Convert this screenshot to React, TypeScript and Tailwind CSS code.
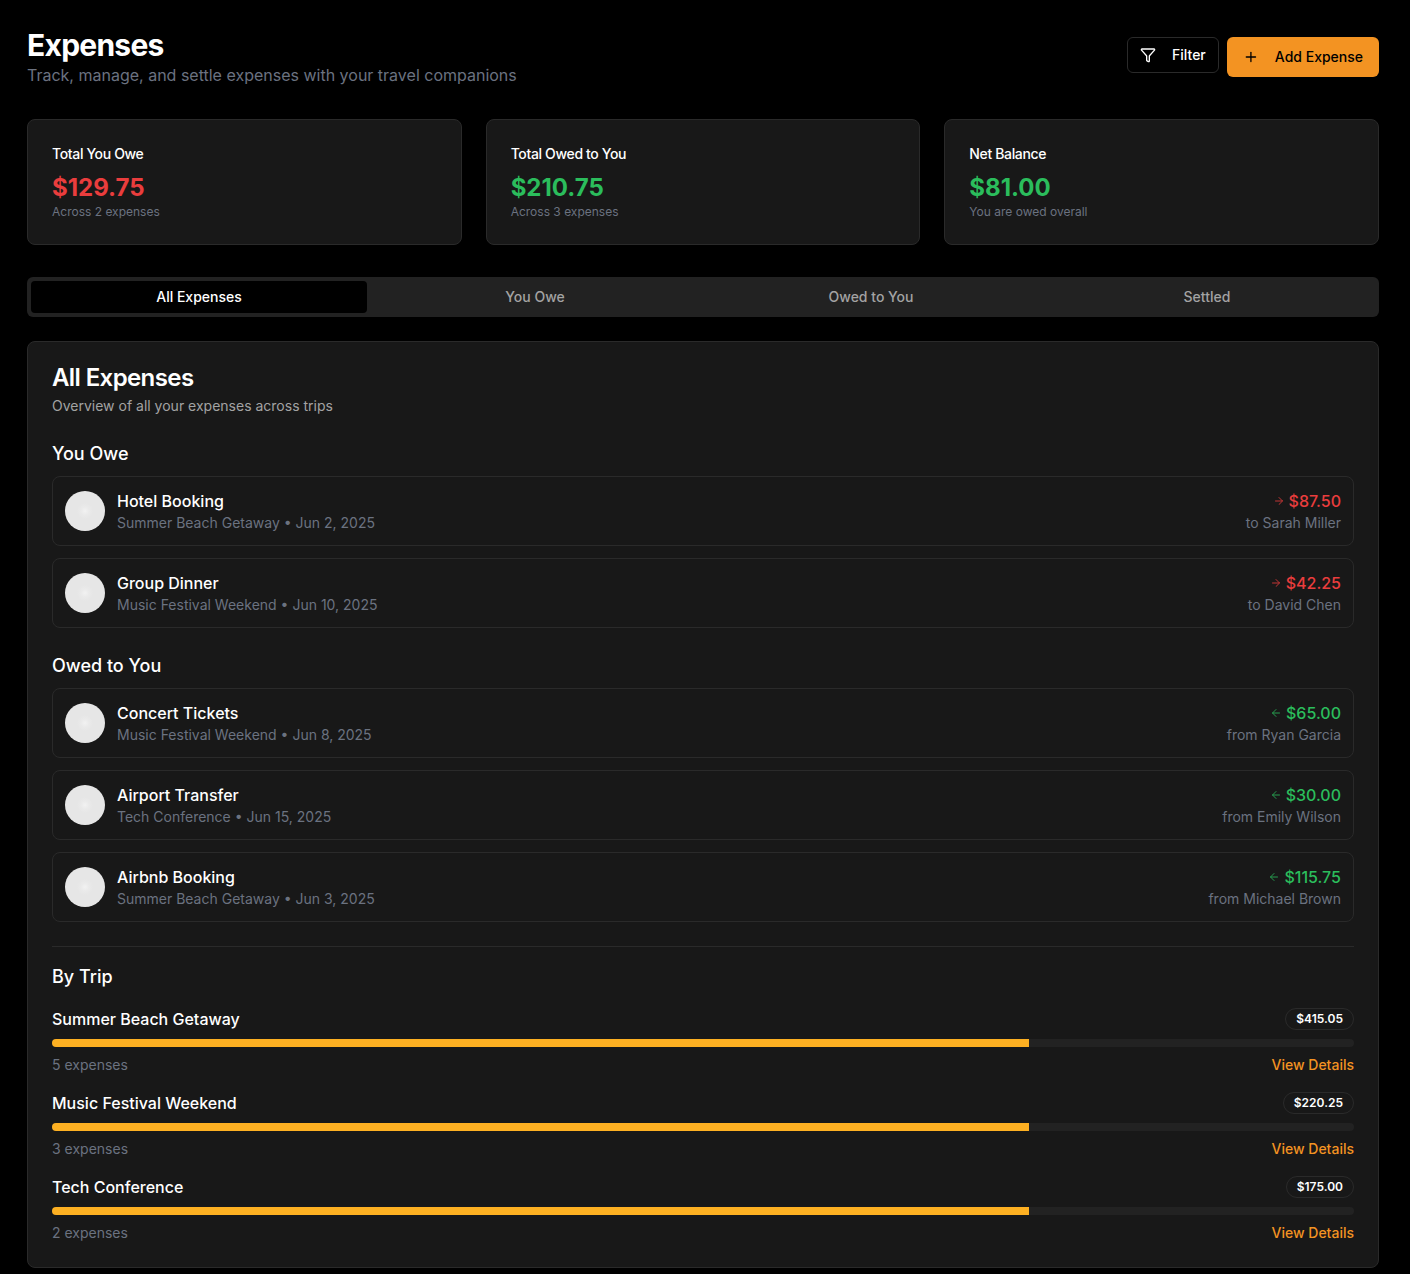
import { ArrowLeft, ArrowRight, Filter, Plus } from "lucide-react";

const youOwe = [
  { title: "Hotel Booking", meta: "Summer Beach Getaway • Jun 2, 2025", amount: "$87.50", who: "to Sarah Miller" },
  { title: "Group Dinner", meta: "Music Festival Weekend • Jun 10, 2025", amount: "$42.25", who: "to David Chen" },
];

const owedToYou = [
  { title: "Concert Tickets", meta: "Music Festival Weekend • Jun 8, 2025", amount: "$65.00", who: "from Ryan Garcia" },
  { title: "Airport Transfer", meta: "Tech Conference • Jun 15, 2025", amount: "$30.00", who: "from Emily Wilson" },
  { title: "Airbnb Booking", meta: "Summer Beach Getaway • Jun 3, 2025", amount: "$115.75", who: "from Michael Brown" },
];

const trips = [
  { name: "Summer Beach Getaway", total: "$415.05", count: "5 expenses" },
  { name: "Music Festival Weekend", total: "$220.25", count: "3 expenses" },
  { name: "Tech Conference", total: "$175.00", count: "2 expenses" },
];

function StatCard({ label, value, sub, color }: { label: string; value: string; sub: string; color: string }) {
  return (
    <div className="h-[126px] rounded-lg border border-[#2a2a2a] bg-[#181818] px-6 pt-6">
      <div className="text-sm leading-5 font-medium tracking-tight text-white">{label}</div>
      <div className={`mt-2 text-2xl leading-8 font-bold ${color}`}>{value}</div>
      <div className="text-xs leading-4 text-[#6b7280]">{sub}</div>
    </div>
  );
}

function ExpenseRow({ item, owed }: { item: (typeof youOwe)[number]; owed: boolean }) {
  return (
    <div className="flex h-[70px] items-center justify-between rounded-lg border border-[#2a2a2a] px-3">
      <div className="flex items-center gap-3">
        <div className="h-10 w-10 rounded-full bg-[radial-gradient(circle,_#f2f2f2_0,_#eaeaea_4px,_#e6e6e6_8px)]" />
        <div>
          <div className="text-base leading-6 font-medium text-white">{item.title}</div>
          <div className="text-sm leading-5 text-[#6b7280]">{item.meta}</div>
        </div>
      </div>
      <div className="text-right">
        <div className={`flex items-center justify-end gap-1 text-base leading-6 font-medium ${owed ? "text-[#2bbd5c]" : "text-[#ea3d3d]"}`}>
          {owed ? <ArrowLeft size={12} className="opacity-80" /> : <ArrowRight size={12} className="opacity-80" />}
          {item.amount}
        </div>
        <div className="text-sm leading-5 text-[#6b7280]">{item.who}</div>
      </div>
    </div>
  );
}

function TripRow({ trip }: { trip: (typeof trips)[number] }) {
  return (
    <div className="h-[84px]">
      <div className="flex h-[22px] items-center justify-between">
        <div className="text-base font-medium text-white">{trip.name}</div>
        <div className="rounded-full border border-[#2a2a2a] px-2.5 py-0.5 text-xs leading-4 font-semibold text-white">{trip.total}</div>
      </div>
      <div className="mt-[9px] h-2 overflow-hidden rounded-full bg-[#222222]">
        <div className="h-full w-3/4 bg-[#fdb022]" />
      </div>
      <div className="mt-2 flex items-center justify-between text-sm leading-5">
        <span className="text-[#6b7280]">{trip.count}</span>
        <span className="font-medium text-[#f39322]">View Details</span>
      </div>
    </div>
  );
}

export default function App() {
  return (
    <div className="h-[1274px] overflow-hidden bg-black pr-[31px] pl-[27px] pt-[27px] font-['Inter',sans-serif]">
      {/* Header */}
      <div className="flex items-start justify-between">
        <div>
          <h1 className="text-3xl leading-9 font-bold tracking-tight text-white">Expenses</h1>
          <p className="text-base leading-6 text-[#6b7280]">Track, manage, and settle expenses with your travel companions</p>
        </div>
        <div className="mt-[10px] flex items-start gap-2">
          <button className="flex h-9 w-[92px] items-center gap-4 rounded-md border border-[#2a2a2a] bg-black px-3 text-sm font-medium text-white">
            <Filter size={16} />
            Filter
          </button>
          <button className="flex h-10 w-[152px] items-center gap-4 rounded-md bg-[#f39322] px-4 text-sm font-medium whitespace-nowrap text-black">
            <Plus size={16} />
            Add Expense
          </button>
        </div>
      </div>

      {/* Totals */}
      <div className="mt-8 grid grid-cols-3 gap-6">
        <StatCard label="Total You Owe" value="$129.75" sub="Across 2 expenses" color="text-[#ea3d3d]" />
        <StatCard label="Total Owed to You" value="$210.75" sub="Across 3 expenses" color="text-[#2bbd5c]" />
        <StatCard label="Net Balance" value="$81.00" sub="You are owed overall" color="text-[#2bbd5c]" />
      </div>

      {/* Tabs */}
      <div className="mt-8 grid h-10 grid-cols-4 rounded-md bg-[#222222] p-1 text-sm font-medium">
        <div className="flex items-center justify-center rounded-sm bg-black text-white">All Expenses</div>
        <div className="flex items-center justify-center text-[#a3a3a3]">You Owe</div>
        <div className="flex items-center justify-center text-[#a3a3a3]">Owed to You</div>
        <div className="flex items-center justify-center text-[#a3a3a3]">Settled</div>
      </div>

      {/* Main card */}
      <div className="mt-6 h-[927px] rounded-lg border border-[#2a2a2a] bg-[#181818] px-6 pt-5">
        <h2 className="text-2xl leading-8 font-semibold tracking-tight text-white">All Expenses</h2>
        <p className="mt-0.5 text-sm leading-5 text-[#a3a3a3]">Overview of all your expenses across trips</p>

        <h3 className="mt-6 text-lg leading-7 font-medium text-white">You Owe</h3>
        <div className="mt-2 flex flex-col gap-3">
          {youOwe.map((item) => (
            <ExpenseRow key={item.title} item={item} owed={false} />
          ))}
        </div>

        <h3 className="mt-6 text-lg leading-7 font-medium text-white">Owed to You</h3>
        <div className="mt-2 flex flex-col gap-3">
          {owedToYou.map((item) => (
            <ExpenseRow key={item.title} item={item} owed={true} />
          ))}
        </div>

        <div className="mt-6 h-px bg-[#2a2a2a]" />

        <h3 className="mt-4 text-lg leading-7 font-medium text-white">By Trip</h3>
        <div className="mt-[17px]">
          {trips.map((trip) => (
            <TripRow key={trip.name} trip={trip} />
          ))}
        </div>
      </div>
    </div>
  );
}
